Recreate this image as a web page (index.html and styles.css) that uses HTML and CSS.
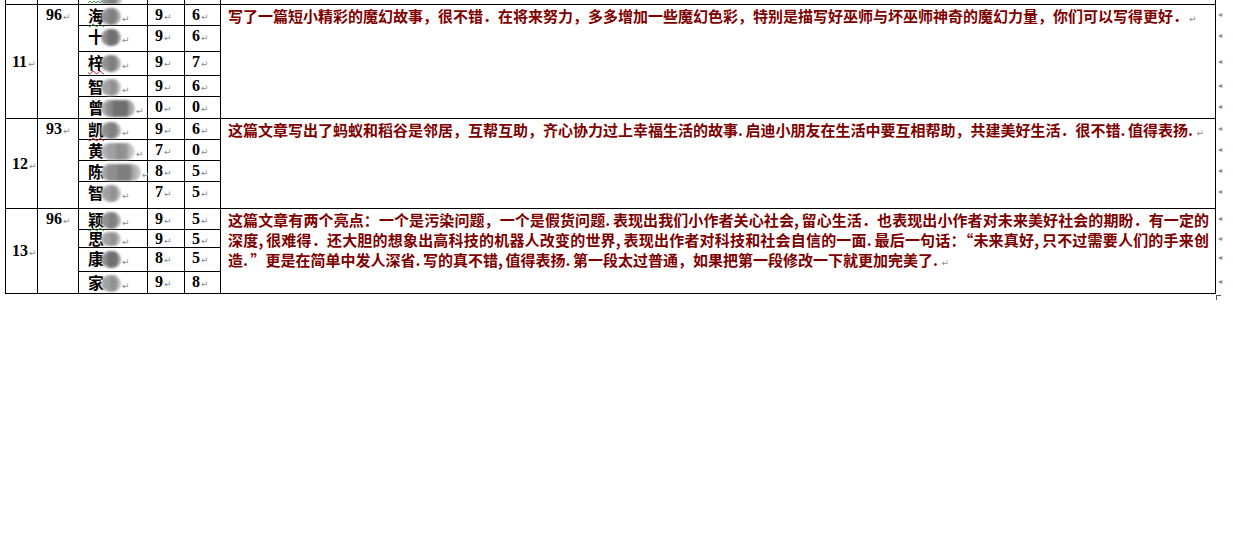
FILE: index.html
```html
<!DOCTYPE html>
<html lang="zh">
<head>
<meta charset="utf-8">
<title>评语表</title>
<link rel="stylesheet" href="styles.css">
</head>
<body>
<table class="grid">
  <colgroup>
    <col class="c-no"><col class="c-total"><col class="c-name"><col class="c-s1"><col class="c-s2"><col class="c-comment"><col class="c-mark">
  </colgroup>
  <tr class="h-top">
    <td></td><td></td>
    <td><div class="clip"><svg class="squig" width="30" height="4" viewBox="0 0 30 4"><polyline points="0,3 2,1 4,3 6,1 8,3 10,1 12,3 14,1 16,3 18,1 20,3 22,1 24,3 26,1 28,3 30,1" fill="none" stroke="#3a9a3a" stroke-width="1"/></svg><span class="blob b-top"></span></div></td>
    <td></td><td></td><td></td><td class="mark"></td>
  </tr>

  <tr class="h20">
    <td class="no" rowspan="5">11<i class="pm">↵</i></td>
    <td class="total" rowspan="5">96<i class="pm">↵</i></td>
    <td class="name"><span class="sur sq-g">海</span><span class="blob"></span><i class="pm">↵</i></td>
    <td class="sc">9<i class="pm">↵</i></td>
    <td class="sc">6<i class="pm">↵</i></td>
    <td class="comment" rowspan="5">写了一篇短小精彩的魔幻故事，很不错．在将来努力，多多增加一些魔幻色彩，特别是描写好巫师与坏巫师神奇的魔幻力量，你们可以写得更好．<i class="pm">↵</i></td>
    <td class="mark">◂</td>
  </tr>
  <tr class="h26">
    <td class="name"><span class="sur">十</span><span class="blob b-dark"></span><i class="pm">↵</i></td>
    <td class="sc">9<i class="pm">↵</i></td>
    <td class="sc">6<i class="pm">↵</i></td>
    <td class="mark">◂</td>
  </tr>
  <tr class="h24">
    <td class="name"><span class="sur sq-r">梓</span><span class="blob"></span><i class="pm">↵</i></td>
    <td class="sc">9<i class="pm">↵</i></td>
    <td class="sc">7<i class="pm">↵</i></td>
    <td class="mark">◂</td>
  </tr>
  <tr class="h21">
    <td class="name"><span class="sur">智</span><span class="blob b-light"></span><i class="pm">↵</i></td>
    <td class="sc">9<i class="pm">↵</i></td>
    <td class="sc">6<i class="pm">↵</i></td>
    <td class="mark">◂</td>
  </tr>
  <tr class="h22">
    <td class="name"><span class="sur">曾</span><span class="blob b-wide b-dark"></span><i class="pm">↵</i></td>
    <td class="sc">0<i class="pm">↵</i></td>
    <td class="sc">0<i class="pm">↵</i></td>
    <td class="mark">◂</td>
  </tr>

  <tr class="h21">
    <td class="no" rowspan="4">12<i class="pm">↵</i></td>
    <td class="total" rowspan="4">93<i class="pm">↵</i></td>
    <td class="name"><span class="sur sq-r">凯</span><span class="blob"></span><i class="pm">↵</i></td>
    <td class="sc">9<i class="pm">↵</i></td>
    <td class="sc">6<i class="pm">↵</i></td>
    <td class="comment" rowspan="4">这篇文章写出了蚂蚁和稻谷是邻居，互帮互助，齐心协力过上幸福生活的故事<span class="hp">.</span>启迪小朋友在生活中要互相帮助，共建美好生活．很不错<span class="hp">.</span>值得表扬<span class="hp">.</span><i class="pm">↵</i></td>
    <td class="mark">◂</td>
  </tr>
  <tr class="h21">
    <td class="name"><span class="sur">黄</span><span class="blob b-wide b-light"></span><i class="pm">↵</i></td>
    <td class="sc">7<i class="pm">↵</i></td>
    <td class="sc">0<i class="pm">↵</i></td>
    <td class="mark">◂</td>
  </tr>
  <tr class="h21">
    <td class="name"><span class="sur">陈</span><span class="blob b-xwide"></span><i class="pm">↵</i></td>
    <td class="sc">8<i class="pm">↵</i></td>
    <td class="sc">5<i class="pm">↵</i></td>
    <td class="mark">◂</td>
  </tr>
  <tr class="h27">
    <td class="name"><span class="sur">智</span><span class="blob b-light"></span><i class="pm">↵</i></td>
    <td class="sc">7<i class="pm">↵</i></td>
    <td class="sc">5<i class="pm">↵</i></td>
    <td class="mark">◂</td>
  </tr>

  <tr class="h21">
    <td class="no" rowspan="4">13<i class="pm">↵</i></td>
    <td class="total" rowspan="4">96<i class="pm">↵</i></td>
    <td class="name"><span class="sur sq-g">颖</span><span class="blob"></span><i class="pm">↵</i></td>
    <td class="sc">9<i class="pm">↵</i></td>
    <td class="sc">5<i class="pm">↵</i></td>
    <td class="comment" rowspan="4"><span class="ln">这篇文章有两个亮点：一个是污染问题，一个是假货问题<span class="hp">.</span>表现出我们小作者关心社会<span class="hp">,</span>留心生活．也表现出小作者对未来美好社会的期盼．有一定的</span><span class="ln">深度<span class="hp">,</span>很难得．还大胆的想象出高科技的机器人改变的世界<span class="hp">,</span>表现出作者对科技和社会自信的一面<span class="hp">.</span>最后一句话：“未来真好<span class="hp">,</span>只不过需要人们的手来创</span><span class="ln-last">造<span class="hp">.</span>”更是在简单中发人深省<span class="hp">.</span>写的真不错<span class="hp">,</span>值得表扬<span class="hp">.</span>第一段太过普通，如果把第一段修改一下就更加完美了<span class="hp">.</span><i class="pm">↵</i></span></td>
    <td class="mark">◂</td>
  </tr>
  <tr class="h18">
    <td class="name"><span class="sur">思</span><span class="blob b-light"></span><i class="pm">↵</i></td>
    <td class="sc">9<i class="pm">↵</i></td>
    <td class="sc">5<i class="pm">↵</i></td>
    <td class="mark">◂</td>
  </tr>
  <tr class="h24">
    <td class="name"><span class="sur">康</span><span class="blob b-dark"></span><i class="pm">↵</i></td>
    <td class="sc">8<i class="pm">↵</i></td>
    <td class="sc">5<i class="pm">↵</i></td>
    <td class="mark">◂</td>
  </tr>
  <tr class="h22">
    <td class="name"><span class="sur">家</span><span class="blob b-light"></span><i class="pm">↵</i></td>
    <td class="sc">9<i class="pm">↵</i></td>
    <td class="sc">8<i class="pm">↵</i></td>
    <td class="mark">◂</td>
  </tr>
</table>
<div class="table-end"></div>
</body>
</html>
```
FILE: styles.css
```css
html, body {
  margin: 0;
  padding: 0;
  background: #fff;
}

.grid {
  margin-left: 5px;
  border-collapse: collapse;
  table-layout: fixed;
  width: 1222px;
  font-family: "Liberation Serif", "Noto Sans CJK SC", serif;
  font-weight: bold;
  font-size: 16px;
  line-height: 20px;
  color: #000;
}

.c-no { width: 32px; }
.c-total { width: 41px; }
.c-name { width: 69px; }
.c-s1 { width: 37px; }
.c-s2 { width: 36px; }
.c-comment { width: 995px; }
.c-mark { width: 12px; }

.grid td {
  border: 1px solid #000;
  padding: 0;
  vertical-align: top;
  white-space: nowrap;
  overflow: visible;
}

.grid td.mark {
  border: none;
  padding-left: 2px;
  font-family: "DejaVu Sans", sans-serif;
  font-weight: normal;
  font-size: 8px;
  color: #8a8a8a;
  line-height: 20px;
}

.grid .h-top td { height: 4px; border-top: none; line-height: 4px; }
.h18 { height: 18px; }
.grid .h18 td { line-height: 17px; }
.grid .h18 td.mark { line-height: 17px; }
.h18 .blob { height: 14px; vertical-align: -1px; }
.h20 { height: 20px; }
.h21 { height: 21px; }
.h22 { height: 22px; }
.h24 { height: 24px; }
.h26 { height: 26px; }
.h27 { height: 27px; }

.clip {
  height: 4px;
  overflow: hidden;
  padding-left: 9px;
  display: flex;
  align-items: flex-end;
}
.squig { display: block; flex: none; }
.clip .blob {
  flex: none;
  margin-left: -18px;
  height: 8px;
}

.no {
  vertical-align: middle !important;
  padding-left: 6px !important;
}

.total {
  padding-left: 8px !important;
}

.name {
  padding-left: 9px !important;
  font-family: "Noto Sans CJK SC", sans-serif;
  font-size: 16px;
}

.sur {
  display: inline-block;
  width: 14px;
  text-decoration-line: underline;
  text-decoration-style: wavy;
  text-decoration-color: transparent;
  text-decoration-thickness: 1px;
  text-underline-offset: 1px;
}
.sq-g { text-decoration-color: #3a9a3a; }
.sq-r { text-decoration-color: #d02020; }

.blob {
  display: inline-block;
  width: 20px;
  height: 17px;
  vertical-align: -3px;
  margin-left: -1px;
  border-radius: 9px;
  background:
    linear-gradient(90deg, rgba(120,120,120,0.0) 0 40%, rgba(100,100,100,0.35) 40% 75%, rgba(0,0,0,0) 75%),
    radial-gradient(circle at 45% 50%, #8e8e8e 0 45%, #b8b8b8 75%, #d8d8d8 100%);
  filter: blur(1.2px);
}
.b-dark {
  background:
    linear-gradient(90deg, rgba(0,0,0,0) 0 35%, rgba(80,80,80,0.4) 35% 80%, rgba(0,0,0,0) 80%),
    radial-gradient(circle at 50% 50%, #858585 0 45%, #aaaaaa 75%, #d2d2d2 100%);
}
.b-light {
  background:
    linear-gradient(90deg, rgba(0,0,0,0) 0 45%, rgba(110,110,110,0.3) 45% 80%, rgba(0,0,0,0) 80%),
    radial-gradient(circle at 45% 50%, #a0a0a0 0 40%, #c4c4c4 75%, #e2e2e2 100%);
}
.b-wide { width: 34px; border-radius: 10px; }
.b-xwide { width: 40px; border-radius: 10px; }
.b-top { width: 22px; }

.sc {
  padding-left: 7px !important;
}

.pm {
  font-style: normal;
  font-weight: normal;
  font-family: "DejaVu Sans", sans-serif;
  font-size: 9px;
  line-height: 0;
  color: #8c8c8c;
  margin-left: 1px;
}

.comment {
  padding: 1px 6px 0 7px !important;
  white-space: normal !important;
  font-family: "Noto Sans CJK SC", sans-serif;
  font-size: 15px;
  line-height: 20px;
  color: #800000;
  text-align: justify;
}

.hp {
  display: inline-block;
  width: 7.5px;
  text-align: left;
}

.ln {
  display: block;
  white-space: nowrap;
  text-align: justify;
  text-align-last: justify;
}
.ln-last {
  display: block;
  white-space: nowrap;
}

.table-end {
  margin-left: 1216px;
  width: 4px;
  height: 4px;
  border-top: 1px solid #555;
  border-left: 1px solid #555;
  margin-top: 1px;
}
```
